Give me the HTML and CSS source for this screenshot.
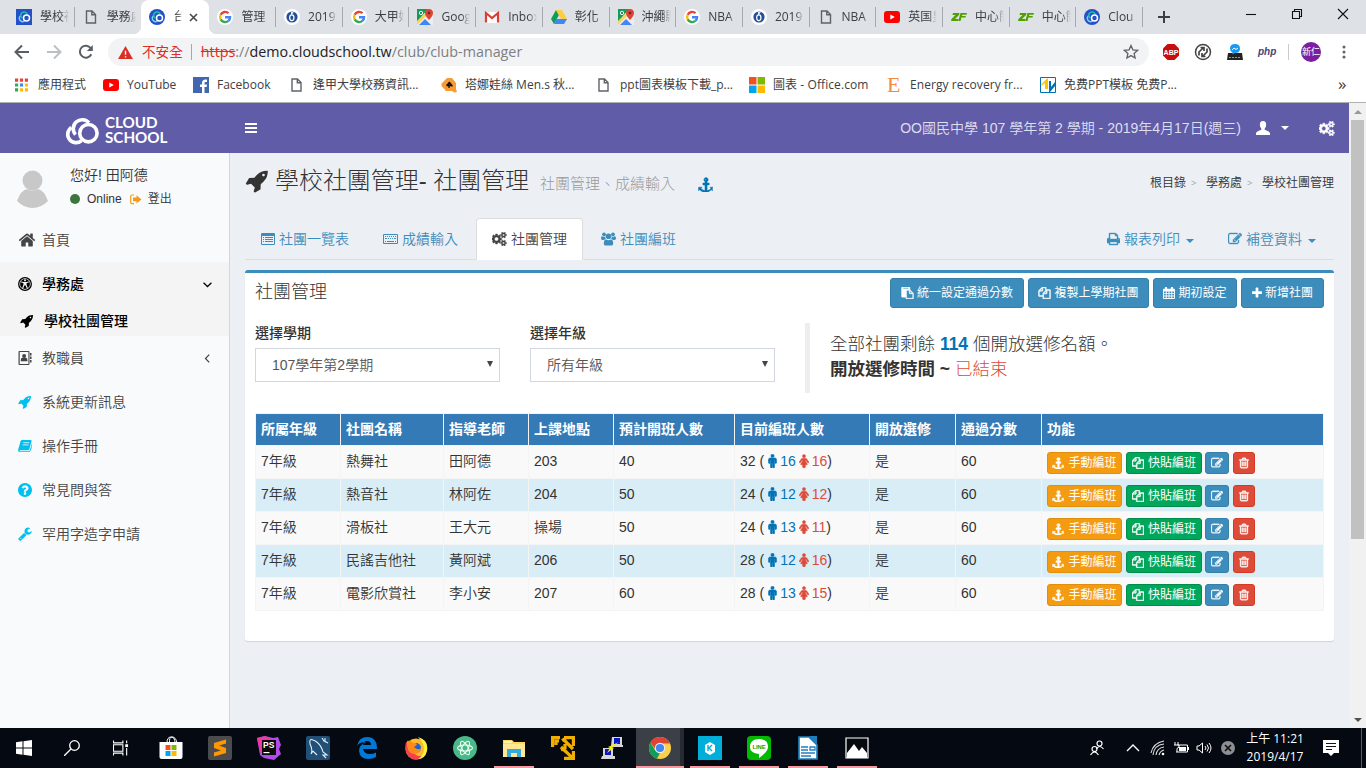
FILE: index.html
```html
<!DOCTYPE html>
<html lang="zh-Hant">
<head>
<meta charset="utf-8">
<title>台中市 CloudSchool - 社團管理</title>
<link rel="stylesheet" href="styles.css">
</head>
<body>
<svg class="sprite" aria-hidden="true">
<defs>
<symbol id="trash" viewBox="192 0 1408 1792"><path stroke="currentColor" stroke-width="60" d="M704 736v576q0 14-9 23t-23 9h-64q-14 0-23-9t-9-23v-576q0-14 9-23t23-9h64q14 0 23 9t9 23zm256 0v576q0 14-9 23t-23 9h-64q-14 0-23-9t-9-23v-576q0-14 9-23t23-9h64q14 0 23 9t9 23zm256 0v576q0 14-9 23t-23 9h-64q-14 0-23-9t-9-23v-576q0-14 9-23t23-9h64q14 0 23 9t9 23zm128 724v-948h-896v948q0 22 7 40.500t14.500 27 10.500 8.500h832q3 0 10.500-8.500t14.500-27 7-40.500zm-672-1076h448l-48-117q-7-9-17-11h-317q-10 2-17 11zm928 32v64q0 14-9 23t-23 9h-96v948q0 83-47 143.500t-113 60.500h-832q-66 0-113-58.500t-47-141.500v-952h-96q-14 0-23-9t-9-23v-64q0-14 9-23t23-9h309l70-167q15-37 54-63t79-26h320q40 0 79 26t54 63l70 167h309q14 0 23 9t9 23z"/></symbol>
<symbol id="edit" viewBox="0 0 1792 1792"><path stroke="currentColor" stroke-width="50" d="M888 1184l116-116-152-152-116 116v56h96v96h56zm440-720q-16-16-33 1l-350 350q-17 17-1 33t33-1l350-350q17-17 1-33zm80 594v190q0 119-84.500 203.500t-203.500 84.500h-832q-119 0-203.500-84.500t-84.500-203.500v-832q0-119 84.500-203.500t203.500-84.500h832q63 0 117 25 15 7 18 23 3 17-9 29l-49 49q-14 14-32 8-23-6-45-6h-832q-66 0-113 47t-47 113v832q0 66 47 113t113 47h832q66 0 113-47t47-113v-126q0-13 9-22l64-64q15-15 35-7t20 29zm-96-738l288 288-672 672h-288v-288zm444 132l-92 92-288-288 92-92q28-28 68-28t68 28l152 152q28 28 28 68t-28 68z"/></symbol>
<symbol id="rocket" viewBox="0 0 1792 1792"><path d="M1440 448q0-40-28-68t-68-28-68 28-28 68 28 68 68 28 68-28 28-68zm224-288q0 249-75.500 430.500t-253.500 360.500q-81 80-195 176l-20 379q-2 16-16 26l-384 224q-7 4-16 4-12 0-23-9l-64-64q-13-14-8-32l85-276-281-281-276 85q-3 1-9 1-14 0-23-9l-64-64q-17-19-5-39l224-384q10-14 26-16l379-20q96-114 176-195 188-187 358-258t431-71q14 0 24 9.500t10 22.500z"/></symbol>
<symbol id="anchor" viewBox="0 0 1792 1792"><path stroke="currentColor" stroke-width="50" d="M960 320q0-26-19-45t-45-19-45 19-19 45 19 45 45 19 45-19 19-45zm768 928v352q0 22-20 30-8 2-12 2-12 0-23-9l-93-93q-119 143-318.500 226.500t-365.500 83.500-365.500-83.500-318.500-226.500l-93 93q-9 9-23 9-4 0-12-2-20-8-20-30v-352q0-14 9-23t23-9h352q22 0 30 20 8 19-7 35l-100 100q67 91 189.500 153.500t271.500 82.500v-647h-192q-26 0-45-19t-19-45v-128q0-26 19-45t45-19h192v-163q-58-34-93-92.500t-35-128.500q0-106 75-181t181-75 181 75 75 181q0 70-35 128.500t-93 92.500v163h192q26 0 45 19t19 45v128q0 26-19 45t-45 19h-192v647q149-20 271.500-82.500t189.500-153.500l-100-100q-15-16-7-35 8-20 30-20h352q14 0 23 9t9 23z"/></symbol>
<symbol id="home" viewBox="0 0 1792 1792"><path d="M1472 992v480q0 26-19 45t-45 19h-384v-384h-256v384h-384q-26 0-45-19t-19-45v-480l1-6 575-474 575 474q1 2 1 6zm223-69l-62 74q-8 9-21 11h-3q-13 0-21-7l-692-577-692 577q-12 8-24 7-13-2-21-11l-62-74q-8-10-7-23.500t11-21.500l719-599q32-26 76-26t76 26l244 204v-195q0-14 9-23t23-9h192q14 0 23 9t9 23v408l219 182q10 8 11 21.500t-7 23.500z"/></symbol>
<symbol id="question" viewBox="128 128 1536 1536"><path d="M1024 1376v-192q0-14-9-23t-23-9h-192q-14 0-23 9t-9 23v192q0 14 9 23t23 9h192q14 0 23-9t9-23zm256-672q0-88-55.500-163t-138.500-116-170-41q-243 0-371 213-15 24 8 42l132 100q7 6 19 6 16 0 25-12 53-68 86-92 34-24 86-24 48 0 85.500 26t37.500 59q0 38-20 61t-68 45q-63 28-115.500 86.500t-52.500 125.500v36q0 14 9 23t23 9h192q14 0 23-9t9-23q0-19 21.500-49.500t54.500-49.500q32-18 49-28.500t46-35 44.500-48 28-60.500 12.500-81zm384 192q0 209-103 385.500t-279.500 279.500-385.500 103-385.500-103-279.500-279.500-103-385.500 103-385.500 279.500-279.500 385.500-103 385.500 103 279.500 279.500 103 385.500z"/></symbol>
<symbol id="wrench" viewBox="64 64 1664 1728"><path d="M448 1472q0-26-19-45t-45-19-45 19-19 45 19 45 45 19 45-19 19-45zm644-420l-682 682q-37 37-90 37-52 0-91-37l-106-108q-38-36-38-90 0-53 38-91l681-681q39 98 114.500 173.500t173.500 114.500zm634-435q0 39-23 106-47 134-164.500 217.500t-258.500 83.500q-185 0-316.500-131.500t-131.500-316.500 131.500-316.500 316.500-131.500q58 0 121.500 16.500t107.500 46.500q16 11 16 28t-16 28l-293 169v224l193 107q5-3 79-48.500t135.500-81 70.500-35.500q15 0 23.500 10t8.500 25z"/></symbol>
<symbol id="plus" viewBox="192 192 1408 1408"><path d="M1600 736v192q0 40-28 68t-68 28h-416v416q0 40-28 68t-68 28h-192q-40 0-68-28t-28-68v-416h-416q-40 0-68-28t-28-68v-192q0-40 28-68t68-28h416v-416q0-40 28-68t68-28h192q40 0 68 28t28 68v416h416q40 0 68 28t28 68z"/></symbol>
<symbol id="cogs" viewBox="0 0 1920 1792"><g stroke="currentColor" stroke-width="60"><path d="M832 896q0-106-75-181t-181-75-181 75-75 181 75 181 181 75 181-75 75-181zm384-91v185q0 10-7 19.500t-16 10.500l-155 24q-11 35-32 76 34 48 90 115 7 11 7 20 0 12-7 19-23 30-82.500 89.500t-78.500 59.500q-11 0-21-7l-115-90q-37 19-77 31-11 108-23 155-7 24-30 24h-186q-11 0-20-7.500t-10-17.500l-23-153q-34-10-75-31l-118 89q-7 7-20 7-11 0-21-8-144-133-144-160 0-9 7-19 10-14 41-53t47-61q-23-44-35-82l-152-24q-10-1-17-9.500t-7-19.500v-185q0-10 7-19.500t16-10.500l155-24q11-35 32-76-34-48-90-115-7-11-7-20 0-12 7-20 22-30 82-89t79-59q11 0 21 7l115 90q34-18 77-32 11-108 23-154 7-24 30-24h186q11 0 20 7.500t10 17.500l23 153q34 10 75 31l118-89q8-7 20-7 11 0 21 8 144 133 144 160 0 8-7 19-12 16-42 54t-45 60q23 48 34 82l152 23q10 2 17 10.500t7 19.500z"/><g id="smallcog"><path d="M1600 1408q0-52-38-90t-90-38-90 38-38 90q0 53 37.500 90.500t90.500 37.500 90.500-37.500 37.500-90.500zm256-70v140q0 16-149 31-12 27-30 52 51 113 51 138 0 4-4 7-122 71-124 71-8 0-46-47t-52-68q-20 2-30 2t-30-2q-14 21-52 68t-46 47q-2 0-124-71-4-3-4-7 0-25 51-138-18-25-30-52-149-15-149-31v-140q0-16 149-31 13-29 30-52-51-113-51-138 0-4 4-7 4-2 35-20t59-34 30-16q8 0 46 46.500t52 67.500q20-2 30-2t30 2q51-71 92-112l6-2q4 0 124 70 4 3 4 7 0 25-51 138 17 23 30 52 149 15 149 31z"/></g><use href="#smallcog" y="-1024"/></g></symbol>
<symbol id="copy" viewBox="0 0 1792 1792"><path stroke="currentColor" stroke-width="70" d="M1696 384q40 0 68 28t28 68v1216q0 40-28 68t-68 28h-960q-40 0-68-28t-28-68v-288h-544q-40 0-68-28t-28-68v-672q0-40 20-88t48-76l408-408q28-28 76-48t88-20h416q40 0 68 28t28 68v328q68-40 128-40h416zm-544 213l-299 299h299v-299zm-640-384l-299 299h299v-299zm196 647l316-316v-416h-384v416q0 40-28 68t-68 28h-416v640h512v-256q0-40 20-88t48-76zm956 804v-1152h-384v416q0 40-28 68t-68 28h-416v640h896z"/></symbol>
<symbol id="paste" viewBox="0 0 1792 1792"><path stroke="currentColor" stroke-width="50" d="M768 1664h896v-640h-416q-40 0-68-28t-28-68v-416h-384v1152zm256-1440v-64q0-13-9.500-22.500t-22.500-9.500h-704q-13 0-22.500 9.500t-9.500 22.500v64q0 13 9.500 22.500t22.500 9.500h704q13 0 22.500-9.500t9.500-22.500zm256 672h299l-299-299v299zm512 128v672q0 40-28 68t-68 28h-960q-40 0-68-28t-28-68v-160h-544q-40 0-68-28t-28-68v-1344q0-40 28-68t68-28h1088q40 0 68 28t28 68v328q21 13 36 28l408 408q28 28 48 76t20 88z"/></symbol>
<symbol id="print" viewBox="64 64 1664 1664"><path stroke="currentColor" stroke-width="50" d="M448 1536h896v-256h-896v256zm0-640h896v-384h-160q-40 0-68-28t-28-68v-160h-640v640zm1152 64q0-26-19-45t-45-19-45 19-19 45 19 45 45 19 45-19 19-45zm128 0v416q0 13-9.500 22.500t-22.500 9.500h-224v160q0 40-28 68t-68 28h-960q-40 0-68-28t-28-68v-160h-224q-13 0-22.500-9.500t-9.500-22.500v-416q0-79 56.500-135.500t135.500-56.500h64v-544q0-40 28-68t68-28h672q40 0 88 20t76 48l152 152q28 28 48 76t20 88v256h64q79 0 135.500 56.500t56.500 135.500z"/></symbol>
<symbol id="male" viewBox="344 0 1104 1792"><g stroke="currentColor" stroke-width="70"><circle cx="896" cy="240" r="210"/><path d="M1408 704v416q0 40-28 68t-68 28-68-28-28-68v-352h-64v912q0 46-33 79t-79 33-79-33-33-79v-464h-64v464q0 46-33 79t-79 33-79-33-33-79v-912h-64v352q0 40-28 68t-68 28-68-28-28-68v-416q0-80 56-136t136-56h640q80 0 136 56t56 136z"/></g></symbol>
<symbol id="female" viewBox="98 0 1340 1792"><g stroke="currentColor" stroke-width="60"><circle cx="768" cy="240" r="210"/><path d="M1408 1056q0 40-28 68t-68 28q-51 0-80-43l-227-341h-45v132l247 411q9 15 9 33 0 26-19 45t-45 19h-192v272q0 46-33 79t-79 33h-160q-46 0-79-33t-33-79v-272h-192q-26 0-45-19t-19-45q0-18 9-33l247-411v-132h-45l-227 341q-29 43-80 43-40 0-68-28t-28-68q0-29 16-53l256-384q73-107 176-107h384q103 0 176 107l256 384q16 24 16 53z"/></g></symbol>
<symbol id="listalt" viewBox="0 0 14 12"><path fill-rule="evenodd" d="M1.200 0h11.600Q14 0 14 1.200v9.600q0 1.200-1.200 1.200H1.200Q0 12 0 10.800V1.200Q0 0 1.200 0zM1 3v7.700q0 .300.300.300h11.400q.300 0 .300-.300V3zM2 4h1v1H2zm2 0h8v1H4zM2 6h1v1H2zm2 0h8v1H4zM2 8h1v1H2zm2 0h8v1H4z"/></symbol>
<symbol id="keyboard" viewBox="0 0 15 10"><path fill-rule="evenodd" d="M1 0h13q1 0 1 1v8q0 1-1 1H1Q0 10 0 9V1Q0 0 1 0zm0 1v8h13V1zM2 2h1v1H2zm2 0h1v1H4zm2 0h1v1H6zm2 0h1v1H8zm2 0h1v1h-1zm2 0h1v1h-1zM2 4h2v1H2zm3 0h1v1H5zm2 0h1v1H7zm2 0h1v1H9zm2 0h2v1h-2zM2 7h1v1H2zm2 0h7v1H4zm8 0h1v1h-1z"/></symbol>
<symbol id="users" viewBox="0 0 16 14"><circle cx="3.200" cy="2" r="2"/><circle cx="12.800" cy="2" r="2"/><circle cx="8" cy="4" r="3"/><path d="M0 6q0-2 1.200-2 2 1 3.200.300Q4.400 6 5.300 7 4 7 3.300 8H1.500Q0 8 0 6zm16 0q0-2-1.200-2-2 1-3.200.300Q11.600 6 10.700 7q1.300 0 2 1h1.800Q16 8 16 6zM3 12q0-4.500 2.500-4.500Q8 9.200 10.500 7.500 13 7.500 13 12q0 2-2 2H5q-2 0-2-2z"/></symbol>
<symbol id="book" viewBox="0 0 14 12"><path d="M4 0h8.500q1.500 0 1 1.500L11.200 9.400Q10.900 10.200 10 10.200H2.200q-.900 0-.600.700.200.400.900.400h8.300q.600 0 .8-.500L14 3q.2 5.500-2 8.500-.3.500-1 .500H2Q-.5 12 .2 9.600L2.600 1.200Q3 0 4 0z"/><path d="M5.200 2.700h6M4.600 4.900h6" stroke="#f9fafc" stroke-width=".8"/></symbol>
<symbol id="access" viewBox="0 0 14 14"><circle cx="7" cy="7" r="6.300" fill="none" stroke="currentColor" stroke-width="1.300"/><circle cx="7" cy="7" r="4.900"/><path fill="#f4f4f4" d="M7 2.300a1 1 0 1 1-.01 0zM3.300 4.500l2.500.6h2.400l2.500-.6.200.9-2.300.7v1.700l1.200 3.300-.9.300L7.400 8.300h-.8l-1.500 3.100-.9-.3 1.200-3.300V6.100l-2.300-.7z"/></symbol>
<symbol id="address" viewBox="0 0 13 14"><path fill-rule="evenodd" d="M1 0h9q1 0 1 1v12q0 1-1 1H1q-1 0-1-1V1q0-1 1-1zm.2 1.100v11.800H9.900V1.100zM11.500 2h1.500v2.500h-1.500zm0 3.500H13V8h-1.500zm0 3.500H13v2.500h-1.500z"/><circle cx="5.600" cy="5" r="2"/><path d="M2.300 9q0-2.300 1.600-2.300h3.300q1.700 0 1.700 2.300v1.200H2.300z"/></symbol>
<symbol id="signout" viewBox="0 0 12 11"><path d="M4 1H2Q.7 1 .7 2.300v6Q.7 9.700 2 9.700h2" fill="none" stroke="currentColor" stroke-width="1.200"/><path d="M6.500 1.200 11.500 5.400 6.500 9.600V7.200H3V3.500h3.500z"/></symbol>
<symbol id="calendar" viewBox="0 0 13 13"><path fill-rule="evenodd" d="M1 2h1V1q0-1 1-1h.5q1 0 1 1v1h4V1q0-1 1-1h.5q1 0 1 1v1h1q1 0 1 1v9q0 1-1 1H1q-1 0-1-1V3q0-1 1-1zM1 5v1.500h2V5zm3 0v1.500h2V5zm3 0v1.500h2V5zm3 0v1.500h2V5zM1 7.300v2h2v-2zm3 0v2h2v-2zm3 0v2h2v-2zm3 0v2h2v-2zM1 10.200V12h2v-1.800zm3 0V12h2v-1.800zm3 0V12h2v-1.800zm3 0V12h2v-1.800z"/></symbol>
<symbol id="user" viewBox="0 0 14 14"><path d="M7 0q3.200 0 3.200 3.500 0 2.400-1.500 4v1.300q5.300 1.800 5.300 3.500V14H0v-1.700Q0 10.600 5.300 8.800V7.500Q3.800 5.900 3.800 3.500 3.800 0 7 0z"/></symbol>
<symbol id="rings" viewBox="0 0 35 30"><g fill="none" stroke="currentColor" stroke-width="3.600"><path d="M17.500 25.600A8.300 8.300 0 1 1 7.500 12.400"/><path d="M11.500 19.600A8.500 8.500 0 1 1 25 7.800"/><circle cx="24.400" cy="18.200" r="8.700"/></g></symbol>
<symbol id="page" viewBox="0 0 11 14"><path d="M1 1h5.500L10 4.500V13H1zM6.300 1v3.700H10" fill="none" stroke="#5f6368" stroke-width="1.400"/></symbol>
<symbol id="google" viewBox="0 0 18 18"><circle cx="9" cy="9" r="9" fill="#fff"/><g fill="none" stroke-width="2.700"><path stroke="#ea4335" d="M4.100 6.500A5.700 5.700 0 0 1 13 4.700"/><path stroke="#fbbc05" d="M4.100 6.500a5.700 5.700 0 0 0 0 5.200"/><path stroke="#34a853" d="M4.100 11.700a5.700 5.700 0 0 0 8.700 1.700"/><path stroke="#4285f4" d="M12.800 13.400q1.900-1.600 1.900-4.200H9"/></g></symbol>
<symbol id="swirl" viewBox="0 0 18 18"><circle cx="9" cy="9" r="9" fill="#fff"/><circle cx="9" cy="9" r="6.300" fill="#234f99"/><ellipse cx="8.800" cy="9.800" rx="2.400" ry="3.200" fill="none" stroke="#fff" stroke-width="1.400"/><path d="m8 3 3 1-3 3z" fill="#fff"/></symbol>
<symbol id="maps" viewBox="0 0 16 16"><path fill="#eee" d="M0 0h16v16H0z"/><path fill="#0f9d58" d="M0 0h11L0 13z"/><path fill="#f8d45c" d="M0 12 12 0l2 2L0 16z"/><path fill="#4285f4" d="m2 16 6-6 6 6z"/><path fill="#db4437" d="M12 0q4 0 4 4 0 3-4 7-4-4-4-7 0-4 4-4z"/><circle cx="12" cy="4" r="1.300" fill="#7b231b"/><circle cx="4" cy="4" r="1.700" fill="none" stroke="#fff"/></symbol>
<symbol id="youtube" viewBox="0 0 16 12"><rect width="16" height="12" rx="3" fill="#f00"/><path fill="#fff" d="m6.300 3.500 4.500 2.500-4.500 2.500z"/></symbol>
<symbol id="zf" viewBox="0 0 16 9"><path fill="#50a000" d="M2 .5h6.500L8 2.500 4 6.500h3.500L7 8.500H0l.5-2L4.500 2.500h-3zM9.500.5H16l-.5 1.700h-4.300l-.3 1.300h4l-.5 1.600h-4l-.9 3.400H7.300z"/></symbol>
<symbol id="cloudfav" viewBox="0 0 16 16"><g fill="none" stroke-width="1.500"><path stroke="#72d6ee" d="M8.500 11.800a3 3 0 1 1-4-5"/><path stroke="#20bfa9" d="M6.200 9a3.300 3.300 0 1 1 5-3.500"/><circle cx="10.500" cy="9" r="3" stroke="#fff"/></g></symbol>
</defs></svg>

<div class="browser">
<div class="tabs">
<div class="tab"><svg class="fav fav-sq"><use href="#cloudfav"/></svg><span>學校社</span></div>
<div class="tab"><svg class="fav page"><use href="#page"/></svg><span>學務處</span></div>
<div class="tab active"><svg class="fav fav-round"><use href="#cloudfav"/></svg><span class="short">台</span><svg class="close" viewBox="0 0 9 9"><path d="m1 1 7 7m0-7-7 7"/></svg></div>
<div class="tab"><svg class="fav"><use href="#google"/></svg><span>管理</span></div>
<div class="tab"><svg class="fav"><use href="#swirl"/></svg><span>2019</span></div>
<div class="tab"><svg class="fav"><use href="#google"/></svg><span>大甲媽</span></div>
<div class="tab"><svg class="fav"><use href="#maps"/></svg><span>Goog</span></div>
<div class="tab"><svg class="fav" viewBox="0 0 16 16"><path fill="#fff" d="M1 3h14v11H1z"/><path d="M2 13.500V4l6 5 6-5v9.500" fill="none" stroke="#d93f35" stroke-width="2.200"/></svg><span>Inbox</span></div>
<div class="tab"><svg class="fav" viewBox="0 0 16 16"><path fill="#0f9d58" d="m5 1-5 9 3 5 5-9z"/><path fill="#ffcd40" d="M5 1h6l5 9h-6z"/><path fill="#4285f4" d="M5.500 10H16l-3 5H3z"/></svg><span>彰化</span></div>
<div class="tab"><svg class="fav"><use href="#maps"/></svg><span>沖繩縣</span></div>
<div class="tab"><svg class="fav"><use href="#google"/></svg><span>NBA</span></div>
<div class="tab"><svg class="fav"><use href="#swirl"/></svg><span>2019</span></div>
<div class="tab"><svg class="fav page"><use href="#page"/></svg><span>NBA</span></div>
<div class="tab"><svg class="fav"><use href="#youtube"/></svg><span>英国皇</span></div>
<div class="tab"><svg class="fav"><use href="#zf"/></svg><span>中心簡</span></div>
<div class="tab"><svg class="fav"><use href="#zf"/></svg><span>中心簡</span></div>
<div class="tab last"><svg class="fav fav-round"><use href="#cloudfav"/></svg><span>Clou</span></div>
<svg class="newtab" viewBox="0 0 12 12"><path d="M6 0v12M0 6h12"/></svg>
<div class="winctl"><svg viewBox="0 0 12 12"><path d="M1 6.500h10"/></svg><svg viewBox="0 0 12 12"><path d="M1.500 3.500h7v7h-7zM3.500 3V1.500h7v7H9"/></svg><svg viewBox="0 0 12 12"><path d="m1 1 10 10M11 1 1 11"/></svg></div>
</div>
<div class="toolbar">
<svg class="nav" viewBox="0 0 16 16"><path d="M15 8H2M8 1.500 1.500 8 8 14.500"/></svg>
<svg class="nav off" viewBox="0 0 16 16"><path d="M1 8h13M8 1.500 14.500 8 8 14.500"/></svg>
<svg class="nav" viewBox="0 0 16 16"><path d="M13.300 10.200A6 6 0 1 1 12.800 4.200"/><path class="tip" d="M14.800 1v6h-6z"/></svg>
<div class="omni">
<svg class="warn" viewBox="0 0 16 14"><path fill="#d93025" d="m8 0 8 14H0z"/><path stroke="#fff" stroke-width="1.500" d="M8 5v4.500M8 11v1.500"/></svg>
<span class="unsafe">不安全</span><i class="vbar"></i>
<span class="url"><s>https</s>://<b>demo.cloudschool.tw</b>/club/club-manager</span>
<svg class="star" viewBox="0 0 16 16"><path d="m8 1.500 1.900 4.300 4.700.5-3.500 3.100 1 4.600L8 11.600 3.900 14l1-4.600L1.400 6.300l4.700-.5z"/></svg>
</div>
<div class="exts">
<svg viewBox="0 0 18 18"><path fill="#c70d0d" d="M5.500 1h7L17 5.500v7L12.500 17h-7L1 12.500v-7z"/><text x="9" y="12" text-anchor="middle" font-size="8" font-weight="bold" textLength="15" lengthAdjust="spacingAndGlyphs" fill="#fff">ABP</text></svg>
<svg viewBox="0 0 18 18"><circle cx="9" cy="9" r="7.500" fill="#fff" stroke="#444" stroke-width="1.500"/><path d="M5 12.500V9l4.500-4.500M6.500 4.500h3.500V8M13 5.500V9l-4.500 4.500M11.500 13.500H8V10" stroke="#444" stroke-width="1.700" fill="none"/></svg>
<svg viewBox="0 0 18 18"><path fill="#222" d="M2 10h14l1 7H1z"/><path fill="#169bf5" d="M9 1q5 0 5 4.500T9 10l-2.500 1.500V9.500Q4 8.500 4 5.500 4 1 9 1z"/><path d="m6 7 2-2 2 1.500L12 5" stroke="#fff" fill="none"/><path stroke="#999" stroke-dasharray="2 1" d="M3 14.500h12"/></svg>
<span class="php">php</span><i class="vbar"></i><span class="avatar">新仁</span>
<svg class="dots" viewBox="0 0 4 14"><circle cx="2" cy="2" r="1.500"/><circle cx="2" cy="7" r="1.500"/><circle cx="2" cy="12" r="1.500"/></svg>
</div>
</div>
<div class="bookmarks">
<div style="width:88px"><svg viewBox="0 0 14 14"><path stroke="#ea4335" stroke-width="3.400" stroke-dasharray="3.400 1.900" d="M0 1.700h14"/><path stroke="#34a853" stroke-width="3.400" d="M0 7h3.400M0 12.300h3.400"/><path stroke="#4285f4" stroke-width="3.400" d="M5.300 7h3.400"/><path stroke="#fbbc05" stroke-width="3.400" d="M10.600 7H14M5.300 12.300h3.400M10.600 12.300H14"/></svg><span>應用程式</span></div>
<div style="width:90px"><svg class="wide"><use href="#youtube"/></svg><span>YouTube</span></div>
<div style="width:97px"><svg viewBox="0 0 16 16" class="wide"><path fill="#4267b2" d="M0 0h16v16H0z"/><path fill="#fff" d="M9 16v-6H7V7.500h2V6q0-3.500 3.500-3.500H14V5h-1.300Q11.500 5 11.500 6v1.500H14L13.600 10h-2.100v6z"/></svg><span>Facebook</span></div>
<div style="width:151px"><svg><use href="#page"/></svg><span>逢甲大學校務資訊...</span></div>
<div style="width:156px"><svg viewBox="0 0 16 16" class="wide"><path fill="#f79b34" d="M6 1h5l4 5v6l1 3-3 .5-2-1.500H5L.5 9V6.500z"/><path d="M8 5v6M5.500 8.500 8.500 5.500 11 8.500v1M5.500 8.500h5" stroke="#111" stroke-width="1.300" fill="none"/></svg><span>塔娜娃絲 Men.s 秋...</span></div>
<div style="width:152px"><svg><use href="#page"/></svg><span>ppt圖表模板下載_p...</span></div>
<div style="width:138px"><svg viewBox="0 0 16 16" class="wide"><path fill="#f25022" d="M0 0h7.500v7.500H0z"/><path fill="#7fba00" d="M8.500 0H16v7.500H8.500z"/><path fill="#00a4ef" d="M0 8.500h7.500V16H0z"/><path fill="#ffb900" d="M8.500 8.500H16V16H8.500z"/></svg><span class="ls">圖表 - Office.com</span></div>
<div style="width:153px"><em>E</em><span class="ls">Energy recovery fr...</span></div>
<div style="width:160px"><svg viewBox="0 0 16 16" class="wide"><path fill="#fff" stroke="#0070b8" d="M.5.500h15v15H.5z"/><path fill="#ffc400" d="M1.500 7 7 1.500h1V12H5V6L1.500 9z"/><path fill="#0070b8" d="M9 4h2v6l4-5v4l-5 6H9z"/></svg><span>免费PPT模板 免费P...</span></div>
<span class="more">»</span>
</div>
</div>

<div class="page-area">
<div class="app">
<header class="topbar">
<div class="brand"><svg><use href="#rings"/></svg><div><p>CLOUD</p><p>SCHOOL</p></div></div>
<div class="burger"><i></i><i></i><i></i></div>
<div class="term">OO國民中學 107 學年第 2 學期 - 2019年4月17日(週三)</div>
<svg class="i-user"><use href="#user"/></svg><i class="caret"></i><svg class="i-cogs"><use href="#cogs"/></svg>
</header>
<div class="cols">
<aside class="side">
<div class="me"><svg class="face" viewBox="0 0 33 38"><circle cx="16.500" cy="10.500" r="10" fill="#c8c8c8"/><path fill="#c8c8c8" d="M1 31q4-11 10-12 5 3 11 0 6 1 10 12-7 7-15.500 7T1 31z"/></svg>
<div><p>您好! 田阿德</p><small><i class="dot"></i>Online<svg><use href="#signout"/></svg>登出</small></div></div>
<nav>
<a><svg class="big"><use href="#home"/></svg>首頁</a>
<a class="on"><svg><use href="#access"/></svg>學務處<svg class="chev" viewBox="0 0 8 8"><path d="m.5 2.500 3.500 3.300 3.500-3.300"/></svg></a>
<a class="on sub"><svg><use href="#rocket"/></svg>學校社團管理</a>
<a><svg><use href="#address"/></svg>教職員<svg class="chev" viewBox="0 0 8 8"><path d="M5.500.500 2.200 4l3.300 3.500"/></svg></a>
<a><svg class="aqua"><use href="#rocket"/></svg>系統更新訊息</a>
<a><svg class="aqua"><use href="#book"/></svg>操作手冊</a>
<a><svg class="aqua"><use href="#question"/></svg>常見問與答</a>
<a><svg class="aqua"><use href="#wrench"/></svg>罕用字造字申請</a>
</nav>
</aside>
<main>
<div class="head"><svg class="hi"><use href="#rocket"/></svg><h1>學校社團管理- 社團管理</h1><span class="desc">社團管理、成績輸入</span><svg class="ha"><use href="#anchor"/></svg>
<div class="crumb"><span>根目錄</span><i>&gt;</i><span>學務處</span><i>&gt;</i><span>學校社團管理</span></div></div>
<div class="navtabs">
<a><svg class="w14"><use href="#listalt"/></svg>社團一覽表</a><a><svg><use href="#keyboard"/></svg>成績輸入</a><a class="cur"><svg><use href="#cogs"/></svg>社團管理</a><a><svg><use href="#users"/></svg>社團編班</a>
<a class="right"><svg class="w13"><use href="#print"/></svg>報表列印<i class="caret"></i></a><a class="end"><svg class="w14"><use href="#edit"/></svg>補登資料<i class="caret"></i></a>
</div>
<section class="box">
<div class="boxhead"><h2>社團管理</h2>
<button style="width:134px"><svg><use href="#paste"/></svg>統一設定通過分數</button><button style="width:121px"><svg><use href="#copy"/></svg>複製上學期社團</button><button style="width:84px"><svg class="w12"><use href="#calendar"/></svg>期初設定</button><button style="width:83px"><svg class="w10"><use href="#plus"/></svg>新增社團</button></div>
<div class="filters">
<div class="field"><label>選擇學期</label><div class="select">107學年第2學期<i></i></div></div>
<div class="field"><label>選擇年級</label><div class="select">所有年級<i></i></div></div>
<blockquote>全部社團剩餘 <b class="blue">114</b> 個開放選修名額。<br><b>開放選修時間 ~</b> <span class="red">已結束</span></blockquote>
</div>
<table>
<colgroup><col style="width:85px"><col style="width:103px"><col style="width:85px"><col style="width:85px"><col style="width:121px"><col style="width:135px"><col style="width:86px"><col style="width:86px"><col style="width:282px"></colgroup>
<thead><tr><th>所屬年級</th><th>社團名稱</th><th>指導老師</th><th>上課地點</th><th>預計開班人數</th><th>目前編班人數</th><th>開放選修</th><th>通過分數</th><th>功能</th></tr></thead>
<tbody>
<tr><td>7年級</td><td>熱舞社</td><td>田阿德</td><td>203</td><td>40</td><td>32 (<span class="blue"><svg><use href="#male"/></svg>16</span><span class="red"><svg><use href="#female"/></svg>16</span>)</td><td>是</td><td>60</td><td><div class="acts"><a class="o"><svg><use href="#anchor"/></svg>手動編班</a><a class="g"><svg><use href="#copy"/></svg>快貼編班</a><a class="b"><svg><use href="#edit"/></svg></a><a class="r"><svg><use href="#trash"/></svg></a></div></td></tr>
<tr><td>7年級</td><td>熱音社</td><td>林阿佐</td><td>204</td><td>50</td><td>24 (<span class="blue"><svg><use href="#male"/></svg>12</span><span class="red"><svg><use href="#female"/></svg>12</span>)</td><td>是</td><td>60</td><td><div class="acts"><a class="o"><svg><use href="#anchor"/></svg>手動編班</a><a class="g"><svg><use href="#copy"/></svg>快貼編班</a><a class="b"><svg><use href="#edit"/></svg></a><a class="r"><svg><use href="#trash"/></svg></a></div></td></tr>
<tr><td>7年級</td><td>滑板社</td><td>王大元</td><td>操場</td><td>50</td><td>24 (<span class="blue"><svg><use href="#male"/></svg>13</span><span class="red"><svg><use href="#female"/></svg>11</span>)</td><td>是</td><td>60</td><td><div class="acts"><a class="o"><svg><use href="#anchor"/></svg>手動編班</a><a class="g"><svg><use href="#copy"/></svg>快貼編班</a><a class="b"><svg><use href="#edit"/></svg></a><a class="r"><svg><use href="#trash"/></svg></a></div></td></tr>
<tr><td>7年級</td><td>民謠吉他社</td><td>黃阿斌</td><td>206</td><td>50</td><td>28 (<span class="blue"><svg><use href="#male"/></svg>12</span><span class="red"><svg><use href="#female"/></svg>16</span>)</td><td>是</td><td>60</td><td><div class="acts"><a class="o"><svg><use href="#anchor"/></svg>手動編班</a><a class="g"><svg><use href="#copy"/></svg>快貼編班</a><a class="b"><svg><use href="#edit"/></svg></a><a class="r"><svg><use href="#trash"/></svg></a></div></td></tr>
<tr><td>7年級</td><td>電影欣賞社</td><td>李小安</td><td>207</td><td>60</td><td>28 (<span class="blue"><svg><use href="#male"/></svg>13</span><span class="red"><svg><use href="#female"/></svg>15</span>)</td><td>是</td><td>60</td><td><div class="acts"><a class="o"><svg><use href="#anchor"/></svg>手動編班</a><a class="g"><svg><use href="#copy"/></svg>快貼編班</a><a class="b"><svg><use href="#edit"/></svg></a><a class="r"><svg><use href="#trash"/></svg></a></div></td></tr>
</tbody></table>
</section>
</main>
</div>
</div>
<div class="scroll"><i class="up"></i><div class="thumb"></div><i class="down"></i></div>
</div>

<footer class="taskbar">
<div class="cell w48"><svg viewBox="0 0 16 16" width="16" height="16"><path fill="#fff" d="M0 2.200 6.500 1.300v6.200H0zM7.500 1.200 16 0v7.500H7.500zM0 8.500h6.500v6.200L0 13.800zM7.500 8.500H16V16l-8.500-1.200z"/></svg></div>
<div class="cell w48"><svg viewBox="0 0 16 16" width="16" height="16"><g fill="none" stroke="#fff" stroke-width="1.300"><circle cx="10.500" cy="5.500" r="4.800"/><path d="M7 9 0 16"/></g></svg></div>
<div class="cell view"><svg viewBox="0 0 17 16" width="17" height="16"><path d="M.5 0v2.500h10V0M.5 16v-2.500h10V16M.5 4.500h10v7H.5zM14.500 0v3M14.500 8v8" fill="none" stroke="#fff" stroke-width="1.200"/><path fill="#fff" d="M13 4h3v3h-3z"/></svg></div>
<div class="cell"><svg viewBox="0 0 24 24"><path d="M8 7Q8 1 12 1q4 0 4 6M10.500 7Q10 1 13 1q4 0 5 6" fill="none" stroke="#fff"/><path fill="#fff" d="M.5 6h23v15q0 2-2 2h-19q-2 0-2-2z"/><path fill="#f25022" d="M6.500 9h5v5h-5z"/><path fill="#7fba00" d="M12.500 9h5v5h-5z"/><path fill="#00a4ef" d="M6.500 15h5v5h-5z"/><path fill="#ffb900" d="M12.500 15h5v5h-5z"/></svg></div>
<div class="cell"><svg viewBox="0 0 24 24"><rect width="24" height="24" rx="2" fill="#4b4b4b"/><path fill="#ff9800" d="m6 7 12-3.500v4L11 9.600l7 2.400v5L6 20.500v-4l7-2-7-2.500z"/></svg></div>
<div class="cell"><svg viewBox="0 0 24 24"><path fill="#b24bea" d="m0 2 8-2 8 2 5-1 3 8-2 4 2 5-7 6-10-2-4-3z"/><path fill="#ed3aa0" d="m0 2 8-2 6 3-8 15-3-2z"/><path fill="#0b0b0b" d="M5 4h14v15H5z"/><text x="6" y="12" font-size="8.500" font-weight="bold" fill="#fff">PS</text><path fill="#fff" d="M6.500 16h6v1.200h-6z"/></svg></div>
<div class="cell"><svg viewBox="0 0 24 24"><rect width="24" height="24" rx="2" fill="#205078"/><path d="M5 18q2-4-1-10-1-6 3-4 6 2 9 9l1 3 4 3-4 0 3 3M16 2l2 3 4 2M19 2v3M5 18l2-3 4 4" fill="none" stroke="#e5eef5" stroke-width="1.100"/></svg></div>
<div class="cell"><svg viewBox="0 0 24 24"><path fill="#0078d7" fill-rule="evenodd" d="M2 10Q4 1 12 1q10 0 10 12H8q1 5 7 5 3 0 6-1.500V21q-3 2-8 2-8 0-9-8 0-6 7-9-7 0-9 4zm6-1h8q0-4-4-4t-4 4z"/></svg></div>
<div class="cell"><svg viewBox="0 0 24 24"><circle cx="12" cy="13" r="10.500" fill="#ffb82e"/><path fill="#f5404e" d="M2 6Q-1 18 8 23q8 2 13-4-8 3-12-3-3-4 0-9-4 1-7-1z"/><circle cx="12" cy="12" r="5" fill="#1764cf"/><path fill="#ff8a18" d="M3 5q4-1 6 2 3-1 4 2l-3 2q4 4 7 1-1 6-7 6Q2 17 3 5z"/><path fill="#fff13c" d="M14 1q11 3 9 14-2 8-9 8 6-4 6-10 0-6-6-12z"/></svg></div>
<div class="cell"><svg viewBox="0 0 24 24"><circle cx="12" cy="12" r="12" fill="#4bb887"/><g fill="none" stroke="#e8fff4" stroke-width="1.100"><ellipse cx="12" cy="12" rx="7.500" ry="3"/><ellipse cx="12" cy="12" rx="7.500" ry="3" transform="rotate(60 12 12)"/><ellipse cx="12" cy="12" rx="7.500" ry="3" transform="rotate(120 12 12)"/></g></svg></div>
<div class="cell run"><svg viewBox="0 0 24 24"><path fill="#ffd75e" d="M1 4h9l2 2h11v15H1z"/><path fill="#fff3ad" d="M2 5h8v2H2z"/><path fill="#ffe793" d="M1 8h22v13H1z"/><path fill="#35a9e0" d="M5 13h14v8h-4v-4H9v4H5z"/></svg></div>
<div class="cell"><svg viewBox="0 0 24 24"><path d="M1.600 11V1.600H9M5 9V5h3M13 1.600h9.400V10M11 4.500l4-2.500M22 13l-9.500-9.500M10 11 22 22.400M13 22.400h9.400V15M14 8v4l-4 2" fill="none" stroke="#f1b000" stroke-width="3.200"/></svg></div>
<div class="cell"><svg viewBox="0 0 24 24"><path fill="#d7d7d7" d="M12 1h10v9H11zM3 12h10v9H3zM2 20h13v3H1zM12 9h11v2H11z"/><path fill="#0a16c0" d="M14 2h6v6h-6zM5 13h6v6H5z"/><path fill="#f7ef00" d="m19 6-7 5 2 1-7 5 3-5-2-1z"/></svg></div>
<div class="cell run chrome"><svg viewBox="0 0 24 24"><circle cx="12" cy="12" r="11" fill="#fbd04b"/><path fill="#db4437" d="M2.500 6.500A11 11 0 0 1 22 7.500H12L8 14z"/><path fill="#0f9d58" d="M2.500 6.500 7.500 15l4.500 2-3 5.600A11 11 0 0 1 2.500 6.500z"/><circle cx="12" cy="12" r="5.200" fill="#eee"/><circle cx="12" cy="12" r="4.100" fill="#4285f4"/></svg></div>
<div class="cell run"><svg viewBox="0 0 24 24"><path fill="#00aeda" d="M0 0h24v24H0z"/><path fill="#fff" d="m12 6 5 3v7l-5 3-5-3V9z"/><path d="M10 9v6m4-6-3 3 3 3" fill="none" stroke="#00aeda" stroke-width="1.400"/></svg></div>
<div class="cell run"><svg viewBox="0 0 24 24"><rect width="24" height="24" rx="4" fill="#00b900"/><path fill="#fff" d="M12 3q9 0 9 8 0 5-9 11v-4Q3 17 3 11q0-8 9-8z"/><text x="12" y="13" text-anchor="middle" font-size="5.800" font-weight="bold" fill="#00a800">LINE</text></svg></div>
<div class="cell run"><svg viewBox="0 0 24 24"><path fill="#fff" stroke="#1f7fbd" stroke-width="1.700" d="M3 1h10l8 8v14H3z"/><path fill="#1f7fbd" d="M13 0h8v9z"/><path d="M5 11h7M5 14h7M5 17h14M5 20h10M14 11h5v3h-5z" fill="none" stroke="#1f7fbd" stroke-width="1.300"/></svg></div>
<div class="cell run"><svg viewBox="0 0 24 24"><path fill="#05080d" stroke="#fff" stroke-width="1.200" d="M1 2h22v20H1z"/><path fill="#fff" d="m2 17 7-9 5 7 3-4 5 6v5H2z"/></svg></div>
<div class="tray">
<svg viewBox="0 0 16 16"><g fill="none" stroke="#fff" stroke-width="1.200"><circle cx="10.500" cy="3.500" r="2.500"/><path d="M7.500 9q3-5 7 0"/><circle cx="5.500" cy="9" r="2.500"/><path d="M1.500 15q4-6 8 0"/></g></svg>
<svg viewBox="0 0 16 16"><path d="m2 11 6-6 6 6" fill="none" stroke="#fff" stroke-width="1.400"/></svg>
<svg viewBox="0 0 16 16"><g fill="none" stroke="#ddd" stroke-width="1.100"><path d="M3 15Q4 5 14 4M6 15q1-7 8-8M9 15q1-4 5-5M1 13Q3 3 14 1"/></g><circle cx="13" cy="14" r="1.300" fill="#fff"/></svg>
<svg viewBox="0 0 16 16"><path d="M4.500 5h10v7H3M2 2v3M5 2v3M1 5h5v2L4 8.500V12" fill="none" stroke="#fff"/><path fill="#fff" d="M6 7h7v4H6zM15 7h1v3h-1z"/></svg>
<svg viewBox="0 0 16 16"><path d="M1 6h2l3.500-3v10L3 10H1zM9 6q2 2 0 4M11 4.500q3 3.500 0 7M13 3q4 5 0 10" fill="none" stroke="#fff"/></svg>
<svg viewBox="0 0 16 16"><circle cx="8" cy="8" r="7" fill="#8c9095"/><path d="m5 5 6 6m0-6-6 6" stroke="#111" stroke-width="1.700"/></svg>
<div class="clock">上午 11:21<br>2019/4/17</div>
<svg viewBox="0 0 16 16"><path fill="#fff" d="M0 0h16v13h-5l-3 3-3-3H0z"/><path stroke="#101318" d="M3 3.500h10M3 6.500h10M3 9.500h6"/></svg>
</div>
<i class="peek"></i>
</footer>
</body>
</html>
```

FILE: styles.css
```css
*{box-sizing:border-box}
body{margin:0;width:1366px;height:768px;overflow:hidden;font:14px/20px "Liberation Sans","Noto Sans CJK TC",sans-serif;color:#333;background:#fff;white-space:nowrap}
svg{fill:currentColor;flex:none;display:block}
p,h1,h2,blockquote{margin:0}
.sprite{position:absolute;width:0;height:0}

/* browser frame */
.browser{height:103px;border-bottom:1px solid #b3b1b3;font:12.5px/16px "Open Sans","Noto Sans CJK TC",sans-serif;color:#3c4043}
.tabs{height:34px;background:#dee1e6;display:flex;padding-left:8px}
.tab{width:66.700px;flex:none;display:flex;align-items:center;padding-left:8px;position:relative}
.tab::after{content:"";position:absolute;right:0;top:7px;width:1px;height:20px;background:#a6a9ae}
.tab:nth-child(2)::after,.tab.active::after{display:none}
.tab .fav{width:16px;height:16px}
.tab .fav.page{height:14px}
.tab .fav-sq{background:#2450c8}
.tab .fav-round{background:#2450c8;border-radius:50%}
.tab span{width:29px;margin-left:8px;overflow:hidden;font-size:12px;-webkit-mask-image:linear-gradient(90deg,#000 70%,transparent)}
.tab span.short{width:9px}
.tab.active{width:68px;background:#fff;border-radius:8px 8px 0 0}
.tab.active::before{content:"";position:absolute;left:-8px;right:-8px;bottom:0;height:8px;background:radial-gradient(circle at 0 0,transparent 8px,#fff 8.500px) 0 0/8px 8px no-repeat,radial-gradient(circle at 8px 0,transparent 8px,#fff 8.500px) 100% 0/8px 8px no-repeat}
.close{width:9px;height:9px;margin-left:7px;stroke:#45494d;stroke-width:1.600}
.newtab{width:12px;height:12px;stroke:#3c4043;stroke-width:2;margin:11px 0 0 15px}
.winctl{display:flex;margin:8px 17px 0 auto;gap:34px}
.winctl svg{width:12px;height:12px;fill:none;stroke:#111;stroke-width:1.100}
.toolbar{height:34px;display:flex;align-items:center;padding:2px 0 0 14px}
.nav{width:16px;height:16px;margin-right:16px;fill:none;stroke:#5a5e62;stroke-width:2}
.nav.off{stroke:#bdc0c3}
.nav .tip{fill:#5a5e62;stroke:none}
.omni{width:1041px;height:28px;background:#f1f3f4;border-radius:14px;display:flex;align-items:center;padding-left:10px;margin-left:-2px;font-size:14.300px}
.warn{width:15px;height:13px}
.unsafe{color:#d93025;margin-left:9px;font-size:13.600px}
.vbar{width:1px;height:16px;background:#a4a7ab;margin:0 9px 0 8px}
.url{color:#7c8084}
.url b{font-weight:400;color:#202124}
.url s{color:#d93025}
.star{width:16px;height:16px;margin:0 10px 0 auto;fill:none;stroke:#5f6368;stroke-width:1.300}
.exts{display:flex;align-items:center;margin-left:13px;font-family:"Liberation Sans","Noto Sans CJK TC",sans-serif}
.exts svg{width:18px;height:18px;margin-right:14px}
.php{font-size:10px;font-style:italic;font-weight:700;color:#3f4778;width:18px}
.exts .vbar{margin:0 12px 0 12px;background:#ccc}
.avatar{width:20px;height:20px;border-radius:50%;background:#7b1fa2;color:#fff;font-size:9px;line-height:20px;text-align:center}
.exts .dots{width:4px;height:14px;margin:0 0 0 21px;fill:#5f6368}
.bookmarks{height:34px;display:flex;align-items:center;padding-left:15px}
.bookmarks div{display:flex;align-items:center;flex:none;font-size:12px}
.bookmarks div svg{width:13px;height:14px;margin-right:10px}
.bookmarks div svg.wide{width:16px;height:16px;margin-right:8px}
.bookmarks em{font:22px/22px "Liberation Serif",serif;color:#f28c3c;width:16px;margin-right:7px}
.bookmarks .ls{letter-spacing:.08px}
.more{margin:-3px 0 0 138px;font-size:17px}

/* page */
.page-area{display:flex;height:625px;font-weight:350}
.app{width:1349px;background:#ecf0f5}
.topbar{height:50px;background:#605ca8;color:#fff;display:flex;align-items:center}
.brand{width:230px;padding-left:64px;display:flex;align-items:center}
.brand svg{width:35px;height:30px;margin-top:4px}
.brand div{font:700 15.200px/15px Lato,sans-serif;margin:4px 0 0 6px}
.brand p{height:15px}
.burger{margin-left:15px;width:12px;display:grid;gap:2px}
.burger i{height:2px;background:#fff}
.term{margin-left:auto;color:#dfdeee}
.i-user{width:14px;height:14px;margin-left:15px}
.caret{display:inline-block;border:4px solid transparent;border-top-color:currentColor;border-bottom:0}
.topbar .caret{margin-left:11px}
.i-cogs{width:16px;height:15px;margin:0 14px 0 30px}
.cols{display:flex;height:575px}
.side{width:230px;background:#f9fafc;border-right:1px solid #d2d6de}
.me{height:65px;padding:12px 0 0 16px;display:flex}
.face{width:33px;height:38px;margin-top:5px}
.me>div{padding-left:21px}
.me small{display:flex;align-items:center;font-size:12px;line-height:18px;margin-top:5px}
.dot{width:10px;height:10px;border-radius:50%;background:#3c763d;margin-right:7px}
.me small svg{width:12px;height:11px;color:#f39c12;margin:0 6px 0 8px}
.side a{display:flex;align-items:center;height:44px;padding-left:18px;color:#444}
.side a svg:first-child{width:14px;height:14px;margin-right:10px}
.side a svg.big:first-child{width:18px;height:18px;margin:0 6px 0 0}
.side a.on{background:#f4f4f4;color:#000;font-weight:500}
.side a.sub{height:30px;padding-left:20px}
.side a .aqua{color:#00c0ef}
.side .chev{width:9px;height:9px;margin:0 17px 0 auto;fill:none;stroke:currentColor;stroke-width:1.100}
main{width:1119px;padding:0 15px}
.head{height:65px;display:flex;padding-top:9px}
.hi{width:25px;height:24px;margin:7px 5px 0 0}
.head h1{font-size:24px;font-weight:300;line-height:37px;width:265px;letter-spacing:-.05px}
.desc{font-size:15px;font-weight:300;color:#999;line-height:44px}
.ha{width:15px;height:15px;margin:15px 0 0 23px;color:#0073b7}
.crumb{margin-left:auto;font-size:12px;line-height:42px;display:flex}
.crumb i{font-style:normal;font-size:9px;color:#aaa;width:20px;padding-left:5px}
.navtabs{height:42px;border-bottom:1px solid #ddd;display:flex;gap:2px}
.navtabs a{height:42px;padding:0 15px;border:1px solid transparent;display:flex;align-items:center;color:#3c8dbc}
.navtabs svg{width:15px;height:14px;margin-right:4px}
.navtabs .w13{width:13px}
.navtabs .w14{width:14px}
.navtabs .cur{background:#fff;color:#444;border-color:#ddd #ddd #fff;border-radius:4px 4px 0 0}
.navtabs .right{margin-left:auto}
.navtabs .caret{margin-left:6px;margin-top:3px}
.navtabs .end{padding-right:17px}
.box{height:371px;margin-top:10px;background:#fff;border-top:3px solid #3c8dbc;border-radius:3px;box-shadow:0 1px 1px rgba(0,0,0,.12);padding:0 10px}
.boxhead{height:40px;display:flex;align-items:flex-start;gap:4px;padding-top:5px}
.boxhead h2{font-size:18px;font-weight:300;line-height:28px;margin-right:auto}
button{height:30px;padding:0;border:1px solid #367fa9;border-radius:3px;background:#3c8dbc;color:#fff;font:400 12px/18px "Liberation Sans","Noto Sans CJK TC",sans-serif;display:flex;align-items:center;justify-content:center}
button svg{width:13px;height:12px;margin-right:3px}
button .w12{width:12px}
button .w10{width:10px}
.filters{display:flex;height:100px;padding-top:10px}
.field{width:245px;margin-right:30px}
.field label{display:block;font-weight:500;line-height:20px;margin-bottom:5px}
.select{height:34px;border:1px solid #d2d6de;padding:0 6px 0 16px;display:flex;align-items:center;justify-content:space-between;color:#555}
.select i{border:3.500px solid transparent;border-top:6px solid #444;border-bottom:0;margin-top:-2px}
blockquote{height:70px;border-left:5px solid #eee;padding:9px 20px;font-size:17.500px;line-height:25px;font-weight:300}
blockquote b{font-weight:600}
.blue{color:#0073b7}
.red{color:#dd4b39}
table{width:1068px;border-collapse:collapse;table-layout:fixed}
th,td{border:1px solid #f4f4f4;padding:0 5px 2px;text-align:left;height:33px}
th{background:#337ab7;color:#fff;height:32px;font-weight:600}
tbody td{background:#f9f9f9}
tbody tr:nth-child(even) td{background:#d9edf7}
td svg{height:14px;width:9px;display:inline-block;vertical-align:-2px;margin:0 3px 0 4px}
td .red svg{width:10px;margin:0 3px}
.acts{display:flex;padding-top:3px}
.acts a{height:22px;border:1px solid;border-radius:3px;color:#fff;font-size:12px;font-weight:400;display:flex;align-items:center;justify-content:center;margin-right:4px}
.acts svg{width:12px;height:12px;margin:0 4px 0 0}
.acts .o{width:75px;background:#f39c12;border-color:#e08e0b}
.acts .g{width:76px;background:#00a65a;border-color:#008d4c;margin-right:3px}
.acts .b{width:24px;background:#3c8dbc;border-color:#367fa9}
.acts .r{width:22px;background:#dd4b39;border-color:#d73925}
.acts .b svg,.acts .r svg{margin:0}
.scroll{width:17px;background:#f1f1f1;display:flex;flex-direction:column;align-items:center;padding:7px 0 6px}
.scroll .up{border:4px solid transparent;border-bottom-color:#999;border-top:0}
.scroll .down{border:4px solid transparent;border-top:4px solid #505050;border-bottom:0;margin-top:auto}
.thumb{width:13px;height:419px;margin-top:6px;background:#c1c1c1}

/* taskbar */
.taskbar{height:40px;background:#050a12;display:flex}
.cell{width:49px;display:flex;justify-content:center;align-items:center;position:relative;flex:none}
.cell.w48{width:48px}
.cell.view{margin-right:1px}
.cell svg{width:24px;height:24px}
.cell svg[width]{width:16px;height:16px}
.cell.run::after{content:"";position:absolute;bottom:0;left:5px;right:4px;height:2px;background:#f59aa0}
.cell.chrome{background:linear-gradient(90deg,#3b3f46 44px,#272b31 44px);width:48px;margin-right:1px}
.cell.chrome::after{left:0;right:0}
.tray{margin-left:auto;width:274px;padding-left:2px;display:grid;grid-template-columns:36px 25px 23px 23px 24px 26px 77px 16px;align-items:center;justify-content:start;color:#fff}
.tray svg{width:16px;height:16px}
.clock{font:12px/18px "Open Sans","Noto Sans CJK TC",sans-serif;text-align:center;width:58px}
.peek{width:1px;background:#5a5d62;margin-right:4px}
```
